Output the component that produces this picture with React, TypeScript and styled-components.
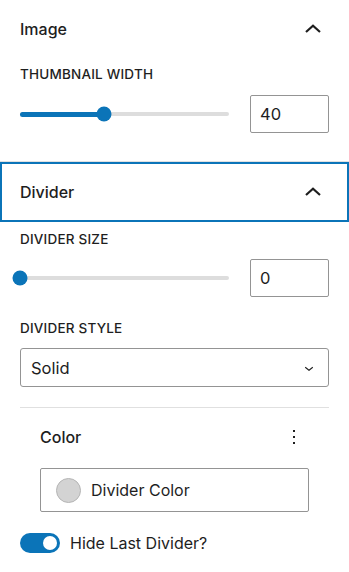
import React from "react";
import styled, { createGlobalStyle } from "styled-components";

const GlobalStyle = createGlobalStyle`
  * { box-sizing: border-box; }
  body {
    margin: 0;
    background: #ffffff;
    font-family: Inter, "Noto Sans", "Liberation Sans", sans-serif;
    color: #1e1e1e;
  }
`;

const BLUE = "#0b74b8";

const Sidebar = styled.div`
  width: 349px;
  height: 572px;
  overflow: hidden;
  background: #fff;
`;

const Panel = styled.section<{ $bordered?: boolean }>`
  border-top: ${(p) => (p.$bordered ? "1px solid #e0e0e0" : "none")};
`;

const PanelHeader = styled.div<{ $focused?: boolean; $h: number }>`
  height: ${(p) => p.$h}px;
  display: flex;
  align-items: center;
  justify-content: space-between;
  padding: 0 24px 0 20px;
  font-size: 16px;
  font-weight: 500;
  box-shadow: ${(p) => (p.$focused ? `inset 0 0 0 2px ${BLUE}` : "none")};
`;

const PanelBody = styled.div<{ $pb: number }>`
  padding: 0 20px ${(p) => p.$pb}px;
  display: flex;
  flex-direction: column;
`;

const Label = styled.div<{ $mt: number }>`
  margin-top: ${(p) => p.$mt}px;
  font-size: 13.5px;
  font-weight: 500;
  line-height: 16px;
  text-transform: uppercase;
  letter-spacing: 0.2px;
`;

const RangeRow = styled.div<{ $mt: number }>`
  margin-top: ${(p) => p.$mt}px;
  display: flex;
  align-items: center;
  gap: 21px;
  height: 38px;
`;

const Track = styled.div`
  position: relative;
  flex: 1;
  height: 4px;
  border-radius: 2px;
  background: #dddddd;
`;

const Fill = styled.div`
  position: absolute;
  left: 0;
  top: -0.5px;
  height: 5px;
  border-radius: 3px;
  background: ${BLUE};
`;

const Thumb = styled.div`
  position: absolute;
  top: 50%;
  width: 15px;
  height: 15px;
  border-radius: 50%;
  background: ${BLUE};
  transform: translate(-50%, -50%);
`;

const NumberBox = styled.div`
  width: 79px;
  height: 38px;
  border: 1px solid #949494;
  border-radius: 2px;
  display: flex;
  align-items: center;
  padding-left: 9px;
  font-size: 16.5px;
`;

const Select = styled.div`
  margin-top: 12px;
  height: 39px;
  border: 1px solid #949494;
  border-radius: 3px;
  display: flex;
  align-items: center;
  justify-content: space-between;
  padding: 0 10px 0 10px;
  font-size: 16.5px;
`;

const Separator = styled.hr<{ $mt: number }>`
  margin: ${(p) => p.$mt}px 0 0;
  border: none;
  border-top: 1px solid #e0e0e0;
  height: 0;
`;

const ColorSection = styled.div`
  padding: 0 20px;
  display: flex;
  flex-direction: column;
`;

const ColorHead = styled.div`
  margin-top: 19px;
  height: 20px;
  display: flex;
  align-items: center;
  justify-content: space-between;
  font-size: 16px;
  font-weight: 500;
`;

const ColorButton = styled.div`
  margin-top: 21px;
  height: 44px;
  border: 1px solid #949494;
  border-radius: 2px;
  display: flex;
  align-items: center;
  gap: 10px;
  padding-left: 15px;
  font-size: 16px;
`;

const Swatch = styled.span`
  width: 25px;
  height: 25px;
  border-radius: 50%;
  background: #d3d3d3;
  border: 1px solid #b5b5b5;
`;

const ToggleRow = styled.label`
  margin-top: 21px;
  height: 20px;
  display: flex;
  align-items: center;
  gap: 10px;
  font-size: 16px;
`;

const Toggle = styled.span<{ $on: boolean }>`
  position: relative;
  width: 40px;
  height: 20px;
  border-radius: 10px;
  background: ${(p) => (p.$on ? BLUE : "#949494")};
  &::after {
    content: "";
    position: absolute;
    top: 3px;
    left: ${(p) => (p.$on ? "23px" : "3px")};
    width: 14px;
    height: 14px;
    border-radius: 50%;
    background: #fff;
  }
`;

const ChevronUp = () => (
  <svg width="24" height="24" viewBox="0 0 24 24">
    <path d="M5 15l7-6.2 7 6.2" fill="none" stroke="#1e1e1e" strokeWidth="2.2" />
  </svg>
);

const ChevronDown = () => (
  <svg width="18" height="18" viewBox="0 0 24 24">
    <path d="M17.5 11.6L12 16l-5.5-4.4.9-1.2L12 14l4.6-3.6.9 1.2z" fill="#1e1e1e" />
  </svg>
);

const MoreVertical = () => (
  <svg width="24" height="24" viewBox="0 0 24 24" style={{ marginRight: 3 }}>
    <path d="M13 19h-2v-2h2v2zm0-6h-2v-2h2v2zm0-6h-2V5h2v2z" fill="#1e1e1e" />
  </svg>
);

const RangeControl = ({ value, mt }: { value: number; mt: number }) => (
  <RangeRow $mt={mt}>
    <Track>
      <Fill style={{ width: `${value}%` }} />
      <Thumb style={{ left: `${value}%` }} />
    </Track>
    <NumberBox>{value}</NumberBox>
  </RangeRow>
);

export default function App() {
  return (
    <Sidebar>
      <GlobalStyle />
      <Panel>
        <PanelHeader $h={58}>
          Image
          <ChevronUp />
        </PanelHeader>
        <PanelBody $pb={28}>
          <Label $mt={8}>Thumbnail Width</Label>
          <RangeControl value={40} mt={13} />
        </PanelBody>
      </Panel>
      <Panel $bordered>
        <PanelHeader $h={60} $focused>
          Divider
          <ChevronUp />
        </PanelHeader>
        <PanelBody $pb={0}>
          <Label $mt={9}>Divider Size</Label>
          <RangeControl value={0} mt={12} />
          <Label $mt={23}>Divider Style</Label>
          <Select>
            Solid
            <ChevronDown />
          </Select>
          <Separator $mt={20} />
          <ColorSection>
            <ColorHead>
              Color
              <MoreVertical />
            </ColorHead>
            <ColorButton>
              <Swatch />
              Divider Color
            </ColorButton>
          </ColorSection>
          <ToggleRow>
            <Toggle $on />
            Hide Last Divider?
          </ToggleRow>
          <Separator $mt={19} />
        </PanelBody>
      </Panel>
    </Sidebar>
  );
}
